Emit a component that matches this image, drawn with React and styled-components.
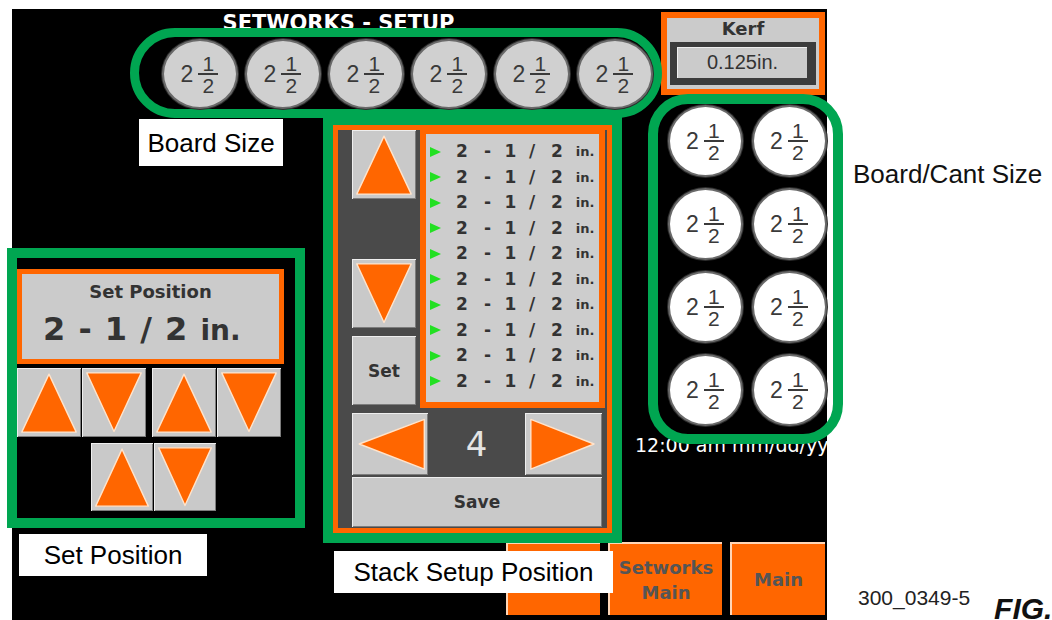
import React from 'react';
import styled, { createGlobalStyle } from 'styled-components';

const GREEN = '#00a651';
const ORANGE = '#ff6600';
const PANEL = '#cbcbcb';
const HMI = '"DejaVu Sans", Verdana, sans-serif';
const DOC = '"Liberation Sans", Arial, sans-serif';

const GlobalStyle = createGlobalStyle`
  html, body { margin: 0; padding: 0; overflow: hidden; background: #fff; }
  * { box-sizing: border-box; }
`;

// page = screenshot of the panel + caption column on the right
const Page = styled.div`
  display: flex;
  width: 1052px;
  height: 620px;
  padding: 9px 0 0 12px;
  overflow: hidden;
`;

const Screen = styled.div`
  flex: none;
  display: grid;
  grid-template-columns: 311px 299px 39px 166px;
  grid-template-rows: 91px 442px 78px;
  width: 815px;
  height: 611px;
  background: #000;
  font-family: ${HMI};
  color: #333;
`;

const TopArea = styled.div`
  grid-column: 1 / 4;
  grid-row: 1;
  display: flex;
  flex-direction: column;
  align-items: flex-start;
`;

const Title = styled.h1`
  flex: none;
  align-self: stretch;
  height: 16px;
  margin: 3px 0 0;
  padding-left: 4px;
  font-size: 21px;
  font-weight: 700;
  line-height: 22px;
  color: #fff;
  text-align: center;
  white-space: nowrap;
`;

const SizeRing = styled.div`
  position: relative;
  flex: none;
  display: flex;
  align-items: flex-start;
  gap: 7px;
  width: 532px;
  height: 90px;
  margin-left: 118px;
  padding: 2px 0 0 23px;
  border: 9px solid ${GREEN};
  border-radius: 45px;
`;

const Disc = styled.div`
  flex: none;
  display: flex;
  align-items: center;
  justify-content: center;
  width: ${p => (p.$cant ? 75 : 76)}px;
  height: ${p => (p.$cant ? 72 : 70)}px;
  border-radius: 50%;
  border: 2px solid #6a6a6a;
  box-shadow: 0 0 0 1px #2e2e2e;
  background: ${p => (p.$cant ? '#ffffff' : '#d0d0d0')};
  font-family: ${DOC};
  color: #3a3a3a;
`;

const Mixed = styled.div`
  display: flex;
  align-items: center;
  gap: 5px;
  margin-right: 1px;
`;

const Whole = styled.span`
  font-size: 23px;
  line-height: 1;
`;

const Frac = styled.span`
  display: flex;
  flex-direction: column;
  align-items: center;
  font-size: 21px;
  line-height: 17px;
`;

const Bar = styled.span`
  width: 20px;
  height: 2px;
  margin: 1px 0 2px;
  background: #3a3a3a;
`;

const KerfBox = styled.div`
  grid-column: 4;
  grid-row: 1;
  display: flex;
  flex-direction: column;
  width: 164px;
  height: 83px;
  margin-top: 3px;
  padding: 1px 3px 0;
  border: 6px solid ${ORANGE};
  background: ${PANEL};
`;

const KerfLabel = styled.div`
  font-size: 18px;
  font-weight: 700;
  line-height: 20px;
  text-align: center;
`;

const KerfField = styled.div`
  height: 43px;
  margin-top: 3px;
  padding: 5px 9px 7px 7px;
  background: #3c3c3c;
`;

const KerfValue = styled.div`
  height: 100%;
  border-top: 1px solid #efefef;
  border-left: 1px solid #efefef;
  background: #cbcbcb;
  font-family: ${DOC};
  font-size: 20px;
  line-height: 28px;
  text-align: center;
`;

// callouts drawn over the screenshot
const Callout = styled.div`
  position: absolute;
  display: flex;
  align-items: center;
  justify-content: center;
  background: #fff;
  color: #000;
  font-family: ${DOC};
  font-size: 26px;
  line-height: 30px;
  white-space: nowrap;
`;

const SizeCallout = styled(Callout)`
  left: 0;
  top: 82px;
  width: 144px;
  height: 47px;
`;

const SetCallout = styled(Callout)`
  left: 2px;
  top: 276px;
  width: 188px;
  height: 42px;
`;

const StackCallout = styled(Callout)`
  left: 1px;
  top: 426px;
  width: 279px;
  height: 42px;
`;

const SetFrame = styled.div`
  grid-column: 1;
  grid-row: 2;
  position: relative;
  align-self: start;
  display: flex;
  flex-direction: column;
  align-items: flex-start;
  width: 298px;
  height: 280px;
  margin: 148px 0 0 -5px;
  border: 10px solid ${GREEN};
`;

const Readout = styled.div`
  width: 267px;
  height: 95px;
  margin-top: 11px;
  padding-top: 8px;
  border: 5px solid ${ORANGE};
  background: ${PANEL};
`;

const ReadoutTitle = styled.div`
  font-size: 18px;
  font-weight: 700;
  line-height: 20px;
  text-align: center;
`;

const ReadoutValue = styled.div`
  margin-top: 9px;
  padding-left: 21px;
  font-size: 32px;
  font-weight: 700;
  line-height: 36px;
  word-spacing: 2px;
  white-space: pre;
`;

const ReadoutUnit = styled.span`
  font-size: 28px;
`;

const PadRow = styled.div`
  display: flex;
  gap: 6px;
  margin: ${p => (p.$second ? '6px 0 0 74px' : '4px 0 0')};
`;

const PadPair = styled.div`
  display: flex;
  gap: 1px;
`;

const Key = styled.button`
  flex: none;
  display: flex;
  align-items: center;
  justify-content: center;
  width: ${p => p.$w}px;
  height: ${p => p.$h}px;
  margin-top: ${p => p.$mt || 0}px;
  padding: 3px;
  border: none;
  border-radius: 0;
  background: #c9c9c9;
  box-shadow: inset 1px 1px 0 #eeeeee, inset -1px -1px 0 #7c7c7c;
  font-family: ${HMI};
  font-size: 17px;
  font-weight: 700;
  color: #333;
`;

const ArrowSvg = styled.svg`
  display: block;
  width: 100%;
  height: 100%;
`;

const TRI = {
  up: '50,5 3,97 97,97',
  down: '3,3 97,3 50,96',
  left: '6,50 99,6 99,95',
  right: '4,6 93,50 4,95',
};

const Arrow = ({ dir }) => (
  <ArrowSvg viewBox="0 0 100 100" preserveAspectRatio="none">
    <polygon
      points={TRI[dir]}
      fill={ORANGE}
      stroke="#ffe4cc"
      strokeWidth="1.4"
      strokeLinejoin="round"
      vectorEffect="non-scaling-stroke"
    />
  </ArrowSvg>
);

const StackFrame = styled.div`
  grid-column: 2;
  grid-row: 2;
  position: relative;
  z-index: 1;
  align-self: start;
  height: 428px;
  margin-top: 15px;
  border: 10px solid ${GREEN};
`;

const StackPanel = styled.div`
  display: flex;
  flex-direction: column;
  align-items: flex-start;
  height: 100%;
  padding: 0 2px 0 14px;
  border: 5px solid ${ORANGE};
  background: #4a4a4a;
`;

const StackTop = styled.div`
  display: flex;
  gap: 4px;
  height: 278px;
`;

const StackKeys = styled.div`
  display: flex;
  flex-direction: column;
  width: 64px;
`;

const CutList = styled.ul`
  width: 185px;
  height: 278px;
  margin: 0;
  padding: 5px 0 0;
  list-style: none;
  border: 6px solid ${ORANGE};
  border-top-width: 4px;
  background: #cdcdcd;
`;

const CutRow = styled.li`
  display: grid;
  grid-template-columns: 23px 26px 25px 21px 22px 28px 28px;
  align-items: center;
  height: 25.5px;
  font-size: 17px;
  font-weight: 700;
  line-height: 25px;
  text-align: center;
`;

const Marker = styled.span`
  justify-self: start;
  width: 0;
  height: 0;
  margin-left: 4px;
  border-left: 11px solid #22e022;
  border-top: 5.5px solid transparent;
  border-bottom: 5.5px solid transparent;
`;

const Unit = styled.span`
  font-size: 13px;
`;

const Stepper = styled.div`
  display: flex;
  height: 62px;
  margin-top: 5px;
`;

const Count = styled.div`
  display: flex;
  align-items: center;
  justify-content: center;
  width: 97px;
  font-size: 34px;
  color: #e4e4e4;
`;

const RightArea = styled.div`
  grid-column: 3 / 5;
  grid-row: 2;
  display: flex;
  flex-direction: column;
  align-items: flex-start;
`;

const CantFrame = styled.div`
  position: relative;
  z-index: 1;
  flex: none;
  display: grid;
  grid-template-columns: 75px 75px;
  column-gap: 9px;
  row-gap: 11px;
  align-content: start;
  width: 195px;
  height: 350px;
  margin: -6px 0 0 26px;
  padding: 1px 0 0 10px;
  border: 10px solid ${GREEN};
  border-radius: 40px;
`;

const Clock = styled.div`
  margin: -9px 0 0 13px;
  font-size: 19px;
  line-height: 20px;
  color: #fff;
  white-space: nowrap;
`;

const BottomBar = styled.div`
  grid-column: 2 / 5;
  grid-row: 3;
  display: flex;
  justify-content: flex-end;
  align-items: flex-start;
  gap: 8px;
  padding-right: 2px;
`;

const NavButton = styled.button`
  flex: none;
  width: ${p => p.$w}px;
  height: 73px;
  padding: 0;
  border: none;
  border-top: 2px solid #ffd6b6;
  border-left: 2px solid #ffd6b6;
  border-radius: 0;
  background: ${ORANGE};
  font-family: ${HMI};
  font-size: 18px;
  font-weight: 700;
  line-height: 25px;
  color: #555;
`;

const Side = styled.aside`
  flex: 1;
  min-width: 0;
  display: flex;
  flex-direction: column;
  font-family: ${DOC};
  color: #111;
`;

const SideCaption = styled.div`
  margin: 150px 0 0 26px;
  font-size: 26px;
  line-height: 30px;
  white-space: nowrap;
`;

const FigureTag = styled.div`
  display: flex;
  align-items: flex-start;
  margin-top: 397px;
  white-space: nowrap;
`;

const PlateNo = styled.span`
  flex: none;
  margin-left: 31px;
  font-size: 21px;
  line-height: 24px;
  color: #222;
`;

const FigLabel = styled.span`
  flex: none;
  margin: 6px 0 0 24px;
  font-size: 30px;
  font-weight: 700;
  font-style: italic;
  line-height: 34px;
`;

const TwoAndHalf = () => (
  <Mixed>
    <Whole>2</Whole>
    <Frac>
      <span>1</span>
      <Bar />
      <span>2</span>
    </Frac>
  </Mixed>
);

const rows = Array.from({ length: 10 });

export default function App() {
  return (
    <>
      <GlobalStyle />
      <Page>
        <Screen>
          <TopArea>
            <Title>SETWORKS - SETUP</Title>
            <SizeRing>
              {Array.from({ length: 6 }).map((_, i) => (
                <Disc key={i}>
                  <TwoAndHalf />
                </Disc>
              ))}
              <SizeCallout>Board Size</SizeCallout>
            </SizeRing>
          </TopArea>

          <KerfBox>
            <KerfLabel>Kerf</KerfLabel>
            <KerfField>
              <KerfValue>0.125in.</KerfValue>
            </KerfField>
          </KerfBox>

          <SetFrame>
            <Readout>
              <ReadoutTitle>Set Position</ReadoutTitle>
              <ReadoutValue>2 - 1 / 2 <ReadoutUnit>in.</ReadoutUnit></ReadoutValue>
            </Readout>
            <PadRow>
              <PadPair>
                <Key $w={64} $h={69}><Arrow dir="up" /></Key>
                <Key $w={64} $h={69}><Arrow dir="down" /></Key>
              </PadPair>
              <PadPair>
                <Key $w={64} $h={69}><Arrow dir="up" /></Key>
                <Key $w={64} $h={69}><Arrow dir="down" /></Key>
              </PadPair>
            </PadRow>
            <PadRow $second>
              <PadPair>
                <Key $w={62} $h={68}><Arrow dir="up" /></Key>
                <Key $w={62} $h={68}><Arrow dir="down" /></Key>
              </PadPair>
            </PadRow>
            <SetCallout>Set Position</SetCallout>
          </SetFrame>

          <StackFrame>
            <StackPanel>
              <StackTop>
                <StackKeys>
                  <Key $w={64} $h={69}><Arrow dir="up" /></Key>
                  <Key $w={64} $h={69} $mt={60}><Arrow dir="down" /></Key>
                  <Key $w={64} $h={69} $mt={8}>Set</Key>
                </StackKeys>
                <CutList>
                  {rows.map((_, i) => (
                    <CutRow key={i}>
                      <Marker />
                      <span>2</span>
                      <span>-</span>
                      <span>1</span>
                      <span>/</span>
                      <span>2</span>
                      <Unit>in.</Unit>
                    </CutRow>
                  ))}
                </CutList>
              </StackTop>
              <Stepper>
                <Key $w={76} $h={62}><Arrow dir="left" /></Key>
                <Count>4</Count>
                <Key $w={77} $h={62}><Arrow dir="right" /></Key>
              </Stepper>
              <Key $w={250} $h={50} $mt={2}>Save</Key>
            </StackPanel>
            <StackCallout>Stack Setup Position</StackCallout>
          </StackFrame>

          <RightArea>
            <CantFrame>
              {Array.from({ length: 8 }).map((_, i) => (
                <Disc key={i} $cant>
                  <TwoAndHalf />
                </Disc>
              ))}
            </CantFrame>
            <Clock>12:00 am mm/dd/yy</Clock>
          </RightArea>

          <BottomBar>
            <NavButton $w={94} />
            <NavButton $w={114}>Setworks<br />Main</NavButton>
            <NavButton $w={95}>Main</NavButton>
          </BottomBar>
        </Screen>

        <Side>
          <SideCaption>Board/Cant Size</SideCaption>
          <FigureTag>
            <PlateNo>300_0349-5</PlateNo>
            <FigLabel>FIG.</FigLabel>
          </FigureTag>
        </Side>
      </Page>
    </>
  );
}
